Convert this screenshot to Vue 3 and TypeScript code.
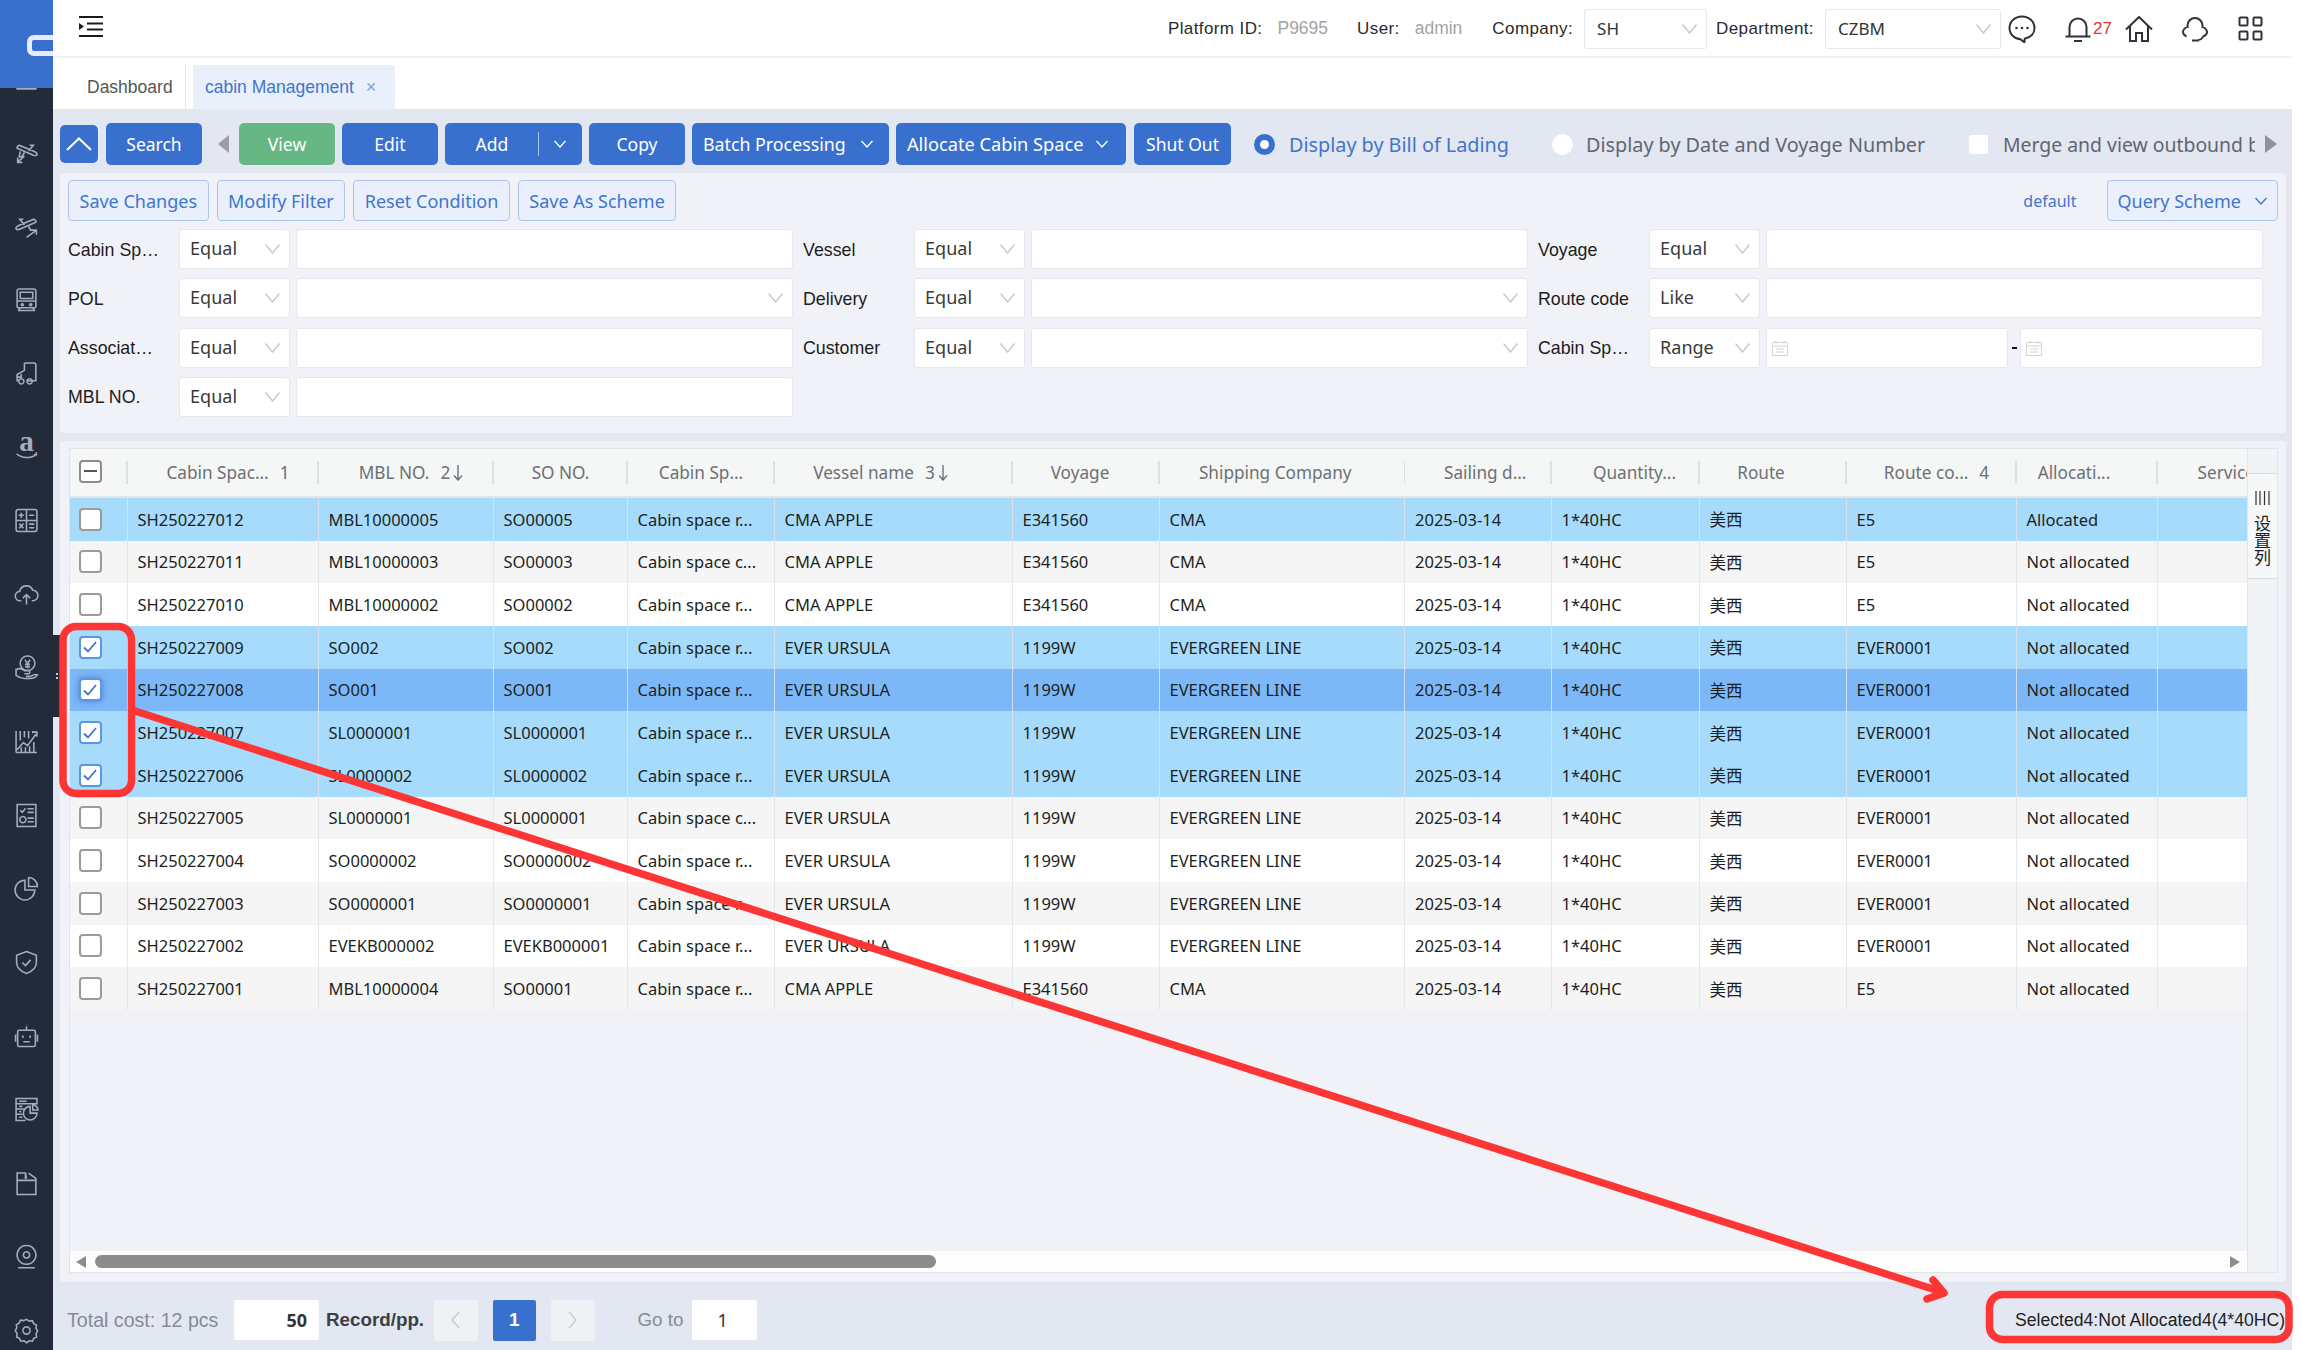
<script setup lang="ts">
interface Row {
  no: string;
  mbl: string;
  so: string;
  type: string;
  vessel: string;
  voyage: string;
  carrier: string;
  routeCode: string;
  alloc: string;
  state?: "sel" | "cur";
  checked?: boolean;
}

const navIcons: string[] = [
  "M3 6.500l2-1.500 14.500 6c2 1 3 2.200 2.500 3.200s-2.500 1-4.500 0L3 8z M15 5h3.500L14 10.500 M10 12l-2.500 4H5l1-5 M3 21.500l7-6 M3.500 17v4.500H8",
  "M21 6.500L19 5 4.500 11c-2 1-3 2.200-2.500 3.200s2.500 1 4.500 0L21 8z M9 5H5.500L10 10.500 M14 12l2 3.500h1.500 M12 22.500l9-6.500 M16.500 15.500H21.500V20",
  "M5 2h14a2 2 0 0 1 2 2v15a1 1 0 0 1-1 1H4a1 1 0 0 1-1-1V4a2 2 0 0 1 2-2z M6 5h12v6H6z M3 13.500h18 M6 20l-2 3 M18 20l2 3 M4.500 22.500h15 M8 16a1 1 0 1 0 .01 0 M16 16a1 1 0 1 0 .01 0",
  "M10 2h9a2 2 0 0 1 2 2v15h-9 M10 2v7l-7 4v6h1 M3 15.500h4v-3 M7 17a2.500 2.500 0 1 0 .01 0 M15 17a2.500 2.500 0 1 0 .01 0",
  "",
  "M4 1.500h16a2 2 0 0 1 2 2v17a2 2 0 0 1-2 2H4a2 2 0 0 1-2-2v-17a2 2 0 0 1 2-2z M12 1.500v21 M2 12h20 M4.500 7h5 M7 4.500v5 M14.500 7h5 M5 15l4 4.500 M9 15l-4 4.500 M14.500 15.500h5 M14.500 19h5",
  "M7 18H6a4.500 4.500 0 0 1-.5-9A6.500 6.500 0 0 1 18 8a5 5 0 0 1 0 10h-1 M12 21.500v-9 M8.500 15.500l3.500-3.500 3.500 3.500",
  "M13 1a7 7 0 1 1-.01 0 M10.500 4.500L13 8l2.500-3.500 M13 8v5 M10.500 9h5 M10.500 11.300h5 M2 13v6.500c2.500 2 5 3 8 3h5c3 0 6-1 7.500-3.500-2-1-5 .5-7 1.500h-4 M2 14c3-1.500 6-1 8 1h4c1.500 0 1.500 3 0 3h-4",
  "M2 22.500V2 M6 2v9 M10 2v6 M14 2v7 M18 2v2 M2 22.500h20 M3 20l6-7 4 3 8-11 M17.500 3H22v4.500 M7 22.500v-5 M11 22.500v-5 M15 22.500v-6 M19 22.500v-10",
  "M3 1.500h18v21H3z M6 7l2 2 3-4 M13 5.500h6 M13 9h6 M13 14.500h6 M13 18h6 M8.500 13a3 3 0 1 1-.01 0",
  "M10.500 4a9.500 9.500 0 1 0 9.500 9.500h-9.500z M14 1.500a8.500 8.500 0 0 1 8.500 8.500H14z",
  "M12 1.500l9.500 3.500v7c0 5-4 8.500-9.500 10.500C6.500 20.500 2.500 17 2.500 12V5z M8 12l3 3 5-5.500",
  "M5 7h14a1.500 1.500 0 0 1 1.500 1.500v12.500a1.500 1.500 0 0 1-1.500 1.500H5A1.500 1.500 0 0 1 3.500 21V8.500A1.500 1.500 0 0 1 5 7z M12 7V3 M12 1.500v.1 M1.500 11v7 M22.500 11v7 M8.500 12v2.500 M15.500 12v2.500 M9 18h6",
  "M2 1.500h20v5H2z M2 6.500v5h9 M2 11.500v5h6 M2 16.500v6h9 M5 4h7 M5 9h3 M5 14h2 M5 19.500h3 M15.500 9a6.500 6.500 0 1 0 6.500 6.500h-6.500z M18 7.500a5 5 0 0 1 5 5h-5z",
  "M3 22.500V2h8v5h1 M11 2l1 5 M3 9h18v13.500H3z M14 2l7 5v2",
  "M12 1.500a9 9 0 1 1-.01 0 M12 7.500a3 3 0 1 1-.01 0 M4 22.800h16",
  "M12 1.300l2.600 1.700 3-.4 1.300 2.800 2.700 1.400-.5 3 1.500 2.700-1.400 2.700.5 3-2.700 1.300-1.300 2.800-3-.4-2.600 1.800-2.600-1.800-3 .4-1.300-2.800-2.700-1.300.5-3L1.300 12l1.400-2.700-.5-3 2.700-1.400 1.300-2.800 3 .4z M12 8.500a3.500 3.500 0 1 1-.01 0",
];

const filters = [
  { label: "Cabin Sp…", op: "Equal", drop: false },
  { label: "Vessel", op: "Equal", drop: false },
  { label: "Voyage", op: "Equal", drop: false },
  { label: "POL", op: "Equal", drop: true },
  { label: "Delivery", op: "Equal", drop: true },
  { label: "Route code", op: "Like", drop: false },
  { label: "Associat…", op: "Equal", drop: false },
  { label: "Customer", op: "Equal", drop: true },
  { label: "Cabin Sp…", op: "Range", drop: false, range: true },
  { label: "MBL NO.", op: "Equal", drop: false },
];

// shift = px the caption sits off the column centre
const columns = [
  { title: "Cabin Spac...", mark: "1", shift: 5 },
  { title: "MBL NO.", mark: "2", arrow: true, shift: 5 },
  { title: "SO NO.", shift: 0 },
  { title: "Cabin Sp...", shift: 0 },
  { title: "Vessel name", mark: "3", arrow: true, shift: -13 },
  { title: "Voyage", shift: -6 },
  { title: "Shipping Company", shift: -7 },
  { title: "Sailing d...", shift: 7 },
  { title: "Quantity...", shift: 9 },
  { title: "Route", shift: -12 },
  { title: "Route co...", mark: "4", shift: 5 },
  { title: "Allocati...", shift: -13 },
];

const cma = { vessel: "CMA APPLE", voyage: "E341560", carrier: "CMA", routeCode: "E5" };
const ever = { vessel: "EVER URSULA", voyage: "1199W", carrier: "EVERGREEN LINE", routeCode: "EVER0001" };
const req = "Cabin space r...";
const can = "Cabin space c...";
const na = "Not allocated";

const rows: Row[] = [
  { no: "SH250227012", mbl: "MBL10000005", so: "SO00005", type: req, ...cma, alloc: "Allocated", state: "sel" },
  { no: "SH250227011", mbl: "MBL10000003", so: "SO00003", type: can, ...cma, alloc: na },
  { no: "SH250227010", mbl: "MBL10000002", so: "SO00002", type: req, ...cma, alloc: na },
  { no: "SH250227009", mbl: "SO002", so: "SO002", type: req, ...ever, alloc: na, state: "sel", checked: true },
  { no: "SH250227008", mbl: "SO001", so: "SO001", type: req, ...ever, alloc: na, state: "cur", checked: true },
  { no: "SH250227007", mbl: "SL0000001", so: "SL0000001", type: req, ...ever, alloc: na, state: "sel", checked: true },
  { no: "SH250227006", mbl: "SL0000002", so: "SL0000002", type: req, ...ever, alloc: na, state: "sel", checked: true },
  { no: "SH250227005", mbl: "SL0000001", so: "SL0000001", type: can, ...ever, alloc: na },
  { no: "SH250227004", mbl: "SO0000002", so: "SO0000002", type: req, ...ever, alloc: na },
  { no: "SH250227003", mbl: "SO0000001", so: "SO0000001", type: req, ...ever, alloc: na },
  { no: "SH250227002", mbl: "EVEKB000002", so: "EVEKB000001", type: req, ...ever, alloc: na },
  { no: "SH250227001", mbl: "MBL10000004", so: "SO00001", type: req, ...cma, alloc: na },
];

function shiftStyle(shift: number) {
  return shift > 0 ? { paddingLeft: shift * 2 + "px" } : { paddingRight: -shift * 2 + "px" };
}
</script>

<template>
  <div class="page">
    <aside class="sidebar">
      <div class="logo"><span class="logo-c"></span></div>
      <nav class="nav">
        <div class="nav-item nav-hidden">
          <svg class="nav-icon" viewBox="0 0 24 24"><path d="M3 3h18v18H3z" /></svg>
        </div>
        <div v-for="(d, i) in navIcons" :key="i" class="nav-item">
          <svg class="nav-icon" viewBox="0 0 24 24">
            <template v-if="d"><path :d="d" /></template>
            <template v-else>
              <text x="12" y="15.500" class="amazon-a">a</text>
              <path d="M2.500 18c5 4.500 13.500 5 19 .5 M21.500 16.500v2.500H19" />
            </template>
          </svg>
        </div>
      </nav>
      <div class="nav-handle"><i></i><i></i></div>
    </aside>

    <main class="main">
      <header class="topbar">
        <svg class="menu-icon" viewBox="0 0 24 21">
          <path d="M0 1h24M8 7.500h16M8 13.500h16M0 20h24" />
          <path class="solid" d="M0 7l5 3.500-5 3.500z" />
        </svg>
        <div class="top-right">
          <span class="kv-key">Platform ID:</span><span class="kv-val">P9695</span>
          <span class="kv-key user">User:</span><span class="kv-val">admin</span>
          <span class="kv-key company">Company:</span>
          <div class="top-select sh">SH<svg class="chev" viewBox="0 0 15 10"><path d="M.5.5L7.500 9 14.500.5" /></svg></div>
          <span class="kv-key dept">Department:</span>
          <div class="top-select czbm">CZBM<svg class="chev" viewBox="0 0 15 10"><path d="M.5.5L7.500 9 14.500.5" /></svg></div>
          <svg class="top-icon chat" viewBox="0 0 28 28">
            <path d="M14 1.500C7 1.500 1.500 6.500 1.500 13S7 24 12.500 24.200c1 .8 2.500 2.400 4 3 0-1 .2-2.500.2-3.500C22.500 22.500 26.500 18.500 26.500 13 26.500 6.500 21 1.500 14 1.500z" />
            <path class="dots" d="M8.500 13h.01M14 13h.01M19.500 13h.01" />
          </svg>
          <svg class="top-icon bell" viewBox="0 0 26 26">
            <path d="M4.500 20V11a8.500 8.500 0 0 1 17 0v9 M.5 20.500h25 M9 25h8" />
          </svg>
          <span class="badge">27</span>
          <svg class="top-icon home" viewBox="0 0 28 26">
            <path d="M1 13.500L14 1l13 12.500 M5 10.500V25h6v-8h6v8h6V10.500" />
          </svg>
          <svg class="top-icon headset" viewBox="0 0 26 26">
            <path d="M5.500 12V9.500a7.500 7.500 0 0 1 15 0V12 M5.500 10.500C3 12 1 14 1 16c0 2 1.500 3.500 3.500 4.500 M20.500 10.500c2.500 1.500 4.500 3.500 4.500 5.500s-1.500 3.500-4 4.500 M21 20.500c-1 2.500-3 3.500-5 3.500 M10 24.500h7" />
          </svg>
          <svg class="top-icon apps" viewBox="0 0 25 25">
            <path d="M2.500 1.500h6a1 1 0 0 1 1 1v6a1 1 0 0 1-1 1h-6a1 1 0 0 1-1-1v-6a1 1 0 0 1 1-1z M16.500 1.500h6a1 1 0 0 1 1 1v6a1 1 0 0 1-1 1h-6a1 1 0 0 1-1-1v-6a1 1 0 0 1 1-1z M2.500 15.500h6a1 1 0 0 1 1 1v6a1 1 0 0 1-1 1h-6a1 1 0 0 1-1-1v-6a1 1 0 0 1 1-1z M16.500 15.500h6a1 1 0 0 1 1 1v6a1 1 0 0 1-1 1h-6a1 1 0 0 1-1-1v-6a1 1 0 0 1 1-1z" />
          </svg>
        </div>
      </header>

      <div class="tabs">
        <span class="tab-home">Dashboard</span>
        <span class="tab-active">cabin Management<span class="tab-x">×</span></span>
      </div>

      <div class="toolbar">
        <button class="btn collapse">
          <svg viewBox="0 0 26 14"><path d="M1 13L13 1.500 25 13" /></svg>
        </button>
        <button class="btn w96">Search</button>
        <span class="tri-left"></span>
        <button class="btn w96 green">View</button>
        <button class="btn w96">Edit</button>
        <button class="btn add"><span class="add-text">Add</span><span class="add-drop"><svg class="btn-chev" viewBox="0 0 12 8"><path d="M.5 1L6 7l5.500-6" /></svg></span></button>
        <button class="btn w96">Copy</button>
        <button class="btn batch">Batch Processing<svg class="btn-chev" viewBox="0 0 12 8"><path d="M.5 1L6 7l5.500-6" /></svg></button>
        <button class="btn allocate">Allocate Cabin Space<svg class="btn-chev" viewBox="0 0 12 8"><path d="M.5 1L6 7l5.500-6" /></svg></button>
        <button class="btn w97">Shut Out</button>
        <span class="radio on"></span><span class="opt opt-on">Display by Bill of Lading</span>
        <span class="radio"></span><span class="opt opt-date">Display by Date and Voyage Number</span>
        <span class="check-mini"></span><span class="opt opt-merge">Merge and view outbound bills</span>
        <span class="tri-right"></span>
      </div>

      <section class="filter">
        <div class="filter-actions">
          <button class="ghost">Save Changes</button>
          <button class="ghost">Modify Filter</button>
          <button class="ghost">Reset Condition</button>
          <button class="ghost">Save As Scheme</button>
          <span class="default-link">default</span>
          <button class="ghost scheme">Query Scheme<svg class="btn-chev" viewBox="0 0 12 8"><path d="M.5 1L6 7l5.500-6" /></svg></button>
        </div>
        <div class="filter-grid">
          <div v-for="(f, i) in filters" :key="i" class="filter-item">
            <label class="f-label">{{ f.label }}</label>
            <div class="f-select">{{ f.op }}<svg class="chev" viewBox="0 0 15 10"><path d="M.5.5L7.500 9 14.500.5" /></svg></div>
            <div v-if="f.range" class="f-range">
              <div class="f-input"><svg class="cal" viewBox="0 0 16 16"><path d="M.5 2.500h15v13H.5z M.5 6h15 M4 .5v3 M12 .5v3 M4 9h8 M4 12h8" /></svg></div>
              <span class="dash"></span>
              <div class="f-input"><svg class="cal" viewBox="0 0 16 16"><path d="M.5 2.500h15v13H.5z M.5 6h15 M4 .5v3 M12 .5v3 M4 9h8 M4 12h8" /></svg></div>
            </div>
            <div v-else class="f-input">
              <svg v-if="f.drop" class="chev" viewBox="0 0 15 10"><path d="M.5.5L7.500 9 14.500.5" /></svg>
            </div>
          </div>
        </div>
      </section>

      <section class="table-panel">
        <div class="grid-box">
          <div class="grid-main">
            <div class="grid-head grid-cols">
              <div class="th th-check"><span class="cb minus"></span></div>
              <div v-for="c in columns" :key="c.title" class="th" :style="shiftStyle(c.shift)">
                <span>{{ c.title }}</span><span v-if="c.mark" class="mark">{{ c.mark }}</span>
                <svg v-if="c.arrow" class="sort-arrow" viewBox="0 0 10 16"><path d="M5 0v15M1 10.500L5 15l4-4.500" /></svg>
              </div>
              <div class="th th-service">Service</div>
            </div>
            <div class="grid-body">
              <div v-for="r in rows" :key="r.no" class="grid-row grid-cols" :class="r.state">
                <div class="td td-check">
                  <span class="cb" :class="{ on: r.checked }">
                    <svg v-if="r.checked" viewBox="0 0 14 12"><path d="M1 6.500L5 10.500 13 1" /></svg>
                  </span>
                </div>
                <div class="td">{{ r.no }}</div>
                <div class="td">{{ r.mbl }}</div>
                <div class="td">{{ r.so }}</div>
                <div class="td">{{ r.type }}</div>
                <div class="td">{{ r.vessel }}</div>
                <div class="td">{{ r.voyage }}</div>
                <div class="td">{{ r.carrier }}</div>
                <div class="td">2025-03-14</div>
                <div class="td">1*40HC</div>
                <div class="td cjk">美西</div>
                <div class="td">{{ r.routeCode }}</div>
                <div class="td">{{ r.alloc }}</div>
                <div class="td"></div>
              </div>
            </div>
            <div class="hscroll">
              <span class="hs-left"></span>
              <span class="hs-thumb"></span>
              <span class="hs-right"></span>
            </div>
          </div>
          <div class="col-strip">
            <div class="col-btn">
              <svg viewBox="0 0 15 14"><path d="M1 0v14M5 0v14M9.500 0v14M14 0v14" /></svg>
              <span>设</span><span>置</span><span>列</span>
            </div>
          </div>
        </div>
      </section>

      <footer class="pager">
        <span class="total">Total cost: 12 pcs</span>
        <div class="size-box">50</div>
        <span class="per">Record/pp.</span>
        <span class="pg pg-prev"><svg viewBox="0 0 9 18"><path d="M8 1L1 9l7 8" /></svg></span>
        <span class="pg pg-cur">1</span>
        <span class="pg"><svg viewBox="0 0 9 18"><path d="M1 1l7 8-7 8" /></svg></span>
        <span class="goto">Go to</span>
        <div class="goto-box">1</div>
        <span class="selected">Selected4:Not Allocated4(4*40HC)</span>
      </footer>
    </main>

    <svg class="notes" viewBox="0 0 2301 1350">
      <rect x="63" y="626.500" width="68.500" height="167" rx="13" />
      <rect x="1989.500" y="1294.500" width="299.500" height="45" rx="13" />
      <path d="M135 711L1942 1292 M1933 1280L1944 1293 1927 1299" />
    </svg>
  </div>
</template>

<style>
html,
body {
  margin: 0;
  background: #fff;
}
</style>

<style scoped>
.page {
  position: relative;
  display: flex;
  width: 2301px;
  height: 1350px;
  overflow: hidden;
  background: #fff;
  font-family: "Liberation Sans", Arial, sans-serif;
  color: #222;
}

.sidebar {
  position: relative;
  width: 53px;
  flex: none;
  background: #232b3b;
}
.logo {
  position: relative;
  z-index: 1;
  height: 88px;
  background: #3a70cd;
  overflow: hidden;
}
.logo-c {
  display: block;
  position: absolute;
  left: 27px;
  top: 35px;
  width: 36px;
  height: 21px;
  box-sizing: border-box;
  border: 5px solid #e6edf8;
  border-radius: 7px;
}
.nav {
  margin-top: -45.600px;
}
.nav-item {
  height: 73.600px;
  display: flex;
  align-items: center;
  justify-content: center;
}
.nav-icon {
  width: 25px;
  height: 25px;
  fill: none;
  stroke: #a4adbe;
  stroke-width: 1.500;
  overflow: visible;
}
.amazon-a {
  font: 700 28px "Liberation Serif", serif;
  fill: #a4adbe;
  stroke: none;
  text-anchor: middle;
}
.nav-handle {
  position: absolute;
  left: 53px;
  top: 635px;
  width: 8px;
  height: 82px;
  background: #232b3b;
  display: flex;
  flex-direction: column;
  align-items: center;
  justify-content: center;
  gap: 2px;
}
.nav-handle i {
  width: 2px;
  height: 2px;
  background: #c8ccd4;
}

.main {
  width: 2239px;
  flex: none;
  display: flex;
  flex-direction: column;
  background: #e3e7f1;
}

.topbar {
  height: 58px;
  flex: none;
  box-sizing: border-box;
  background: #fff;
  border-bottom: 2px solid #f0f2f6;
  display: flex;
  align-items: center;
  padding: 0 29px 0 26px;
}
.menu-icon {
  width: 24px;
  height: 21px;
  fill: none;
  stroke: #1c1c1c;
  stroke-width: 2;
  margin-top: -3px;
}
.menu-icon .solid {
  fill: #1c1c1c;
  stroke: none;
}
.top-right {
  margin-left: auto;
  display: flex;
  align-items: center;
  font-size: 17px;
  padding-top: 1px;
}
.kv-key {
  color: #2a2a2a;
  letter-spacing: 0.400px;
}
.kv-val {
  color: #a3a3a3;
  margin-left: 15px;
  font-size: 17.500px;
}
.user {
  margin-left: 29px;
}
.company {
  margin-left: 30px;
}
.dept {
  margin-left: 9px;
}
.top-select {
  position: relative;
  box-sizing: border-box;
  height: 40px;
  margin-left: 11px;
  padding-left: 12px;
  line-height: 37px;
  background: #fff;
  border: 1.500px solid #e6e8ec;
  border-radius: 3px;
  font-family: "Noto Sans", sans-serif;
  font-size: 17px;
  color: #333;
}
.sh {
  width: 123px;
}
.czbm {
  width: 176px;
}
.chev {
  position: absolute;
  right: 9px;
  top: 14px;
  width: 15px;
  height: 10px;
  fill: none;
  stroke: #c3c6cc;
  stroke-width: 1.300;
}
.top-icon {
  fill: none;
  stroke: #2f3339;
  stroke-width: 2;
  flex: none;
}
.chat {
  width: 28px;
  height: 28px;
  margin-left: 7px;
}
.chat .dots {
  stroke-width: 2.600;
  stroke-linecap: round;
}
.bell {
  width: 26px;
  height: 26px;
  margin-left: 29px;
}
.badge {
  width: 34px;
  padding-left: 2px;
  box-sizing: border-box;
  color: #d63a32;
  font-size: 17px;
}
.home {
  width: 28px;
  height: 26px;
}
.headset {
  width: 26px;
  height: 26px;
  margin-left: 29px;
}
.apps {
  width: 25px;
  height: 25px;
  margin-left: 30px;
}

.tabs {
  height: 51px;
  flex: none;
  background: #fff;
  display: flex;
  align-items: flex-end;
  font-size: 17.500px;
}
.tab-home {
  box-sizing: border-box;
  width: 133px;
  height: 44px;
  padding-left: 34px;
  line-height: 44px;
  color: #555;
  border-right: 1.500px solid #e8e8e8;
}
.tab-active {
  box-sizing: border-box;
  margin-left: 7px;
  width: 202px;
  height: 44px;
  padding-left: 12px;
  line-height: 44px;
  color: #3f75cd;
  background: #e9f0fb;
}
.tab-x {
  margin-left: 12px;
  color: #7f9fd6;
  font-size: 18px;
}

.toolbar {
  height: 42px;
  flex: none;
  padding: 14px 0 8px 7px;
  display: flex;
  align-items: center;
  overflow: hidden;
  font-family: "Noto Sans", sans-serif;
  font-size: 17.500px;
}
.btn {
  flex: none;
  height: 42px;
  margin: 0 7px 0 0;
  padding: 0;
  border: 0;
  border-radius: 5px;
  background: #3a70cd;
  color: #fff;
  font: inherit;
  display: inline-flex;
  align-items: center;
  justify-content: center;
}
.collapse {
  width: 38px;
  height: 38px;
  margin-right: 8px;
}
.collapse svg {
  width: 26px;
  height: 14px;
  fill: none;
  stroke: #fff;
  stroke-width: 2;
}
.w96 {
  width: 96px;
}
.w97 {
  width: 97px;
}
.green {
  background: #66b783;
}
.add {
  width: 137px;
}
.add-text {
  width: 93px;
  padding-left: 1px;
  text-align: center;
}
.add-drop {
  width: 43px;
  height: 24px;
  border-left: 1px solid #a9c3ee;
  display: flex;
  align-items: center;
  justify-content: center;
  margin-right: 1px;
}
.btn-chev {
  width: 12px;
  height: 8px;
  fill: none;
  stroke: currentColor;
  stroke-width: 1.300;
}
.batch {
  width: 197px;
  gap: 15px;
  justify-content: flex-start;
  padding-left: 11px;
  font-size: 17.800px;
  box-sizing: border-box;
}
.allocate {
  width: 230px;
  gap: 13px;
  justify-content: flex-start;
  padding-left: 11px;
  margin-right: 8px;
  font-size: 18.200px;
  box-sizing: border-box;
}
.tri-left {
  flex: none;
  width: 0;
  height: 0;
  margin: 0 10px 0 9px;
  border-top: 9px solid transparent;
  border-bottom: 9px solid transparent;
  border-right: 11px solid #9a9da3;
}
.tri-right {
  flex: none;
  width: 0;
  height: 0;
  margin-left: 10px;
  border-top: 9px solid transparent;
  border-bottom: 9px solid transparent;
  border-left: 12px solid #8f9299;
}
.radio {
  flex: none;
  box-sizing: border-box;
  width: 21px;
  height: 21px;
  border-radius: 50%;
  background: #fff;
  margin-left: 16px;
}
.radio.on {
  margin-left: 16px;
  border: 6px solid #3a70cd;
}
.opt {
  flex: none;
  color: #5f6672;
  margin-left: 15px;
  white-space: nowrap;
  font-size: 19.800px;
}
.opt-on {
  color: #3f75cd;
  width: 218px;
  margin-left: 14px;
}
.opt-date {
  width: 339px;
  margin-left: 13px;
}
.opt-on + .radio {
  margin-left: 45px;
}
.check-mini {
  flex: none;
  width: 19px;
  height: 19px;
  margin-left: 44px;
  background: #fff;
  border-radius: 2px;
}
.opt-merge {
  width: 252px;
  margin-left: 15px;
  overflow: hidden;
  font-size: 19.400px;
}

.filter {
  box-sizing: border-box;
  height: 260px;
  flex: none;
  margin: 0 6.500px 0 7px;
  padding: 7px 8px;
  border-radius: 4px;
  background: #f0f2f7;
  font-family: "Noto Sans", sans-serif;
  font-size: 18px;
}
.filter-actions {
  display: flex;
  align-items: center;
  gap: 8px;
  height: 41px;
}
.ghost {
  box-sizing: border-box;
  height: 41px;
  padding: 0 10.500px;
  border: 1.500px solid #abc5ea;
  border-radius: 4px;
  background: #e9f0fb;
  color: #3f75cd;
  font: inherit;
  white-space: nowrap;
}
.default-link {
  margin-left: auto;
  margin-right: 22px;
  color: #3f75cd;
  font-size: 16px;
}
.scheme {
  width: 171px;
  margin-right: 0;
  display: flex;
  align-items: center;
  justify-content: space-between;
  padding: 0 10px;
}
.filter-grid {
  margin-top: 8px;
  display: grid;
  grid-template-columns: repeat(3, 725px);
  column-gap: 10px;
  row-gap: 9.300px;
}
.filter-item {
  display: grid;
  grid-template-columns: 110.600px 111.400px 1fr;
  column-gap: 0;
  height: 40px;
  align-items: center;
}
.f-label {
  font-family: "Liberation Sans", Arial, sans-serif;
  font-size: 17.800px;
  padding-top: 2px;
  color: #1d1d1d;
}
.f-select,
.f-input {
  position: relative;
  box-sizing: border-box;
  height: 40px;
  background: #fff;
  border: 1.500px solid #e4e7ec;
  border-radius: 3px;
}
.f-select {
  padding-left: 10.500px;
  line-height: 37px;
  color: #3a3a3a;
}
.f-input {
  margin-left: 6px;
}
.f-range {
  display: grid;
  grid-template-columns: 1fr 12px 1fr;
  align-items: center;
  margin-left: 6px;
}
.f-range .f-input {
  margin-left: 0;
}
.dash {
  justify-self: center;
  width: 5px;
  height: 2px;
  background: #111;
}
.cal {
  position: absolute;
  left: 5px;
  top: 11px;
  width: 16px;
  height: 16px;
  fill: none;
  stroke: #d2d3d5;
  stroke-width: 1;
}

.table-panel {
  box-sizing: border-box;
  height: 841px;
  flex: none;
  margin: 8px 6px 0 7px;
  padding: 7px 8px 9px 8.500px;
  border-radius: 4px;
  background: #f0f2f7;
}
.grid-box {
  box-sizing: border-box;
  height: 825px;
  display: flex;
  border: 1.500px solid #e2e4e8;
}
.grid-main {
  flex: 1;
  min-width: 0;
  display: flex;
  flex-direction: column;
  overflow: hidden;
}
.grid-cols {
  display: grid;
  grid-template-columns: 58px 191px 175px 134px 147px 238px 147px 245.500px 146.500px 148px 147px 170px 141px 120px;
}
.grid-head {
  height: 49px;
  flex: none;
  box-sizing: border-box;
  background: #f5f6f6;
  border-bottom: 2px solid #e4e6ea;
  font-family: "Noto Sans", sans-serif;
  font-size: 17.200px;
  color: #6c7074;
  width: max-content;
}
.th {
  position: relative;
  display: flex;
  align-items: center;
  justify-content: center;
  white-space: nowrap;
}
.th::after {
  content: "";
  position: absolute;
  right: 0;
  top: 12px;
  height: 23px;
  width: 1.500px;
  background: #dfe0e2;
}
.th-service {
  justify-content: flex-start;
  padding-left: 40px;
}
.mark {
  margin-left: 11px;
}
.sort-arrow {
  width: 10px;
  height: 16px;
  margin-left: 3px;
  fill: none;
  stroke: #6c7074;
  stroke-width: 1.400;
}
.th-check,
.td-check {
  justify-content: flex-start;
  padding-left: 9px;
}
.th-check {
  padding-bottom: 3px;
}
.grid-body {
  flex: 1;
  min-height: 0;
  font-family: "Noto Sans", "Noto Sans CJK SC", sans-serif;
  font-size: 16.500px;
  color: #1c1f22;
}
.grid-row {
  height: 42.670px;
  width: max-content;
  background: #fff;
}
.grid-row:nth-child(even) {
  background: #f5f5f5;
}
.grid-row.sel {
  background: #a7dbfc;
}
.grid-row.cur {
  background: #7cb8f8;
}
.td {
  box-sizing: border-box;
  display: flex;
  align-items: center;
  padding-left: 10px;
  border-right: 1.500px solid rgba(224, 228, 236, 0.85);
  white-space: nowrap;
  overflow: hidden;
}
.td.td-check {
  padding-left: 9px;
  overflow: visible;
}
.cjk {
  font-family: "Noto Sans CJK SC", sans-serif;
}
.cb {
  box-sizing: border-box;
  width: 23px;
  height: 23px;
  border: 2px solid #9b9b9b;
  border-radius: 4px;
  background: #fff;
  display: flex;
  align-items: center;
  justify-content: center;
}
.cb svg {
  width: 14px;
  height: 12px;
  fill: none;
  stroke: #3f75cd;
  stroke-width: 1.800;
}
.cb.on {
  border-color: #5c96e2;
}
.cur .cb {
  box-shadow: 0 0 6px rgba(60, 100, 190, 0.7);
}
.cb.minus {
  border-color: #8c8c8c;
  background: linear-gradient(#555, #555) center / 13px 2px no-repeat #fff;
}
.hscroll {
  height: 21px;
  flex: none;
  background: #fdfdfd;
  display: flex;
  align-items: center;
  padding-left: 6px;
  position: relative;
}
.hs-left {
  width: 0;
  height: 0;
  border-top: 6.500px solid transparent;
  border-bottom: 6.500px solid transparent;
  border-right: 10px solid #8c8c8c;
}
.hs-thumb {
  width: 841px;
  height: 13px;
  margin-left: 9px;
  border-radius: 6.500px;
  background: #8c8c8c;
}
.hs-right {
  margin-left: auto;
  margin-right: 7px;
  width: 0;
  height: 0;
  border-top: 6.500px solid transparent;
  border-bottom: 6.500px solid transparent;
  border-left: 10px solid #8c8c8c;
}
.col-strip {
  width: 30px;
  flex: none;
  box-sizing: border-box;
  padding-top: 24px;
  border-left: 1.500px solid #e2e4e8;
  background: #f1f3f6;
}
.col-btn {
  box-sizing: border-box;
  height: 106px;
  border-top: 1.500px solid #d9dbde;
  border-bottom: 1.500px solid #d9dbde;
  background: #f6f7f8;
  display: flex;
  flex-direction: column;
  align-items: center;
  padding-top: 17px;
  font-family: "Noto Sans CJK SC", sans-serif;
  font-size: 17px;
  line-height: 17px;
  color: #222;
}
.col-btn svg {
  width: 15px;
  height: 14px;
  margin-bottom: 9px;
  fill: none;
  stroke: #333;
  stroke-width: 1.200;
}

.pager {
  flex: 1;
  display: flex;
  align-items: center;
  padding: 8px 7px 0 14px;
  font-size: 18.800px;
}
.total {
  width: 167px;
  color: #868c96;
  font-size: 19.600px;
  white-space: nowrap;
}
.size-box,
.goto-box {
  box-sizing: border-box;
  height: 40px;
  background: #fff;
  border-radius: 2px;
  font-weight: 700;
  font-size: 18px;
  line-height: 40px;
  color: #333;
  font-family: "Noto Sans", sans-serif;
}
.size-box {
  width: 85px;
  padding-right: 12px;
  text-align: right;
}
.goto-box {
  width: 65px;
  padding-left: 26px;
  font-weight: 400;
}
.per {
  margin-left: 7px;
  width: 108px;
  font-weight: 700;
  color: #3c3f44;
}
.pg {
  box-sizing: border-box;
  width: 43.500px;
  height: 41px;
  margin-right: 15px;
  background: #f0f1f4;
  border-radius: 2px;
  display: flex;
  align-items: center;
  justify-content: center;
  font-weight: 700;
}
.pg svg {
  width: 9px;
  height: 18px;
  fill: none;
  stroke: #c7cad0;
  stroke-width: 1.400;
}
.pg-cur {
  background: #3a70cd;
  color: #fff;
}
.goto {
  margin-left: 28px;
  width: 54px;
  color: #868c96;
}
.selected {
  margin-left: auto;
  font-size: 17.600px;
  color: #1f1f1f;
  white-space: nowrap;
}

.notes {
  position: absolute;
  left: 0;
  top: 0;
  width: 2301px;
  height: 1350px;
  pointer-events: none;
  fill: none;
  stroke: #fd3535;
  stroke-width: 7.500;
  stroke-linecap: round;
  stroke-linejoin: round;
}
</style>
